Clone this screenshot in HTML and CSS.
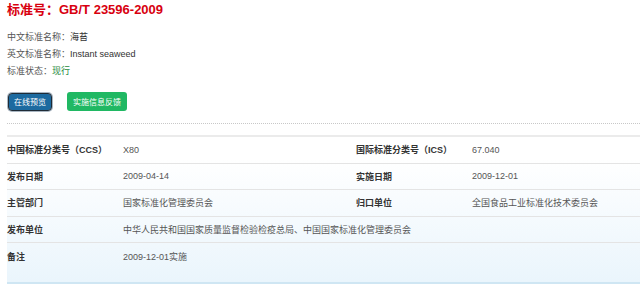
FILE: index.html
```html
<!DOCTYPE html>
<html lang="zh-CN">
<head>
  <meta charset="UTF-8" />
  <title>标准号：GB/T 23596-2009</title>
  <link rel="stylesheet" href="styles.css">
</head>
<body>

  <h1 class="std-title">标准号：GB/T 23596-2009</h1>

  <div class="std-info">
    <p>中文标准名称：<span class="val">海苔</span></p>
    <p>英文标准名称：<span class="val">Instant seaweed</span></p>
    <p>标准状态：<span class="state">现行</span></p>
  </div>

  <div class="actions">
    <button class="btn btn-preview">在线预览</button>
    <button class="btn btn-feedback">实施信息反馈</button>
  </div>

  <table class="detail">
    <tr>
      <th>中国标准分类号（CCS）</th>
      <td class="v1">X80</td>
      <th>国际标准分类号（ICS）</th>
      <td>67.040</td>
    </tr>
    <tr>
      <th>发布日期</th>
      <td class="v1">2009-04-14</td>
      <th>实施日期</th>
      <td>2009-12-01</td>
    </tr>
    <tr>
      <th>主管部门</th>
      <td class="v1">国家标准化管理委员会</td>
      <th>归口单位</th>
      <td>全国食品工业标准化技术委员会</td>
    </tr>
    <tr>
      <th>发布单位</th>
      <td colspan="3">中华人民共和国国家质量监督检验检疫总局、中国国家标准化管理委员会</td>
    </tr>
    <tr class="last">
      <th>备注</th>
      <td colspan="3">2009-12-01实施</td>
    </tr>
  </table>

</body>
</html>
```

FILE: styles.css
```css
body {
  margin: 0;
  padding: 0 0 0 7px;
  background-color: white;
  font-family: "Liberation Sans", "Noto Sans CJK SC", sans-serif;
  font-size: 9px;
  color: #555;
}
.std-title {
  margin: 0;
  padding-top: 3px;
  font-size: 13px;
  line-height: 14px;
  color: #d8000f;
}
.std-info {
  margin-top: 12px;
}
.std-info p {
  margin: 0;
  line-height: 17px;
}
.std-info .val {
  color: #333;
}
.std-info .state {
  color: #1e8a3c;
}
.actions {
  display: flex;
  gap: 16px;
  align-items: center;
  margin-top: 12px;
  padding-bottom: 12px;
  border-bottom: 1px dotted #c8c8c8;
}
.btn {
  font-family: "Liberation Sans", "Noto Sans CJK SC", sans-serif;
  font-size: 8px;
  color: white;
  border: none;
  border-radius: 3px;
  padding: 0;
  height: 19px;
  cursor: pointer;
}
.btn-preview {
  background-color: #1c6aa0;
  height: 16px;
  width: 42px;
  outline: 1px solid #1f2b36;
  box-shadow: 0 0 0 2px #a9b6c2;
  margin-left: 2px;
}
.btn-feedback {
  background-color: #20b863;
  width: 60px;
}
.detail {
  width: 100%;
  margin-top: 11px;
  border-collapse: collapse;
  border-top: 2px solid #ebebeb;
  border-bottom: 2px solid #cfe6f3;
  background: linear-gradient(#ffffff 15%, #eaf5fc);
}
.detail th,
.detail td {
  height: 25.6px;
  padding: 0;
  text-align: left;
  white-space: nowrap;
  border-bottom: 1px solid #e4e4e4;
  font-size: 9px;
}
.detail th {
  color: #333;
  font-weight: bold;
  width: 116px;
}
.detail td {
  color: #555;
}
.detail td.v1 {
  width: 233px;
}
.detail tr.last th,
.detail tr.last td {
  padding-bottom: 13px;
  border-bottom: none;
}
```
